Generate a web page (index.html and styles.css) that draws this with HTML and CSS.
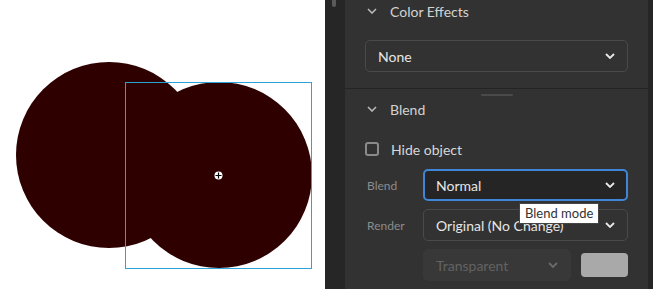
FILE: index.html
```html
<!DOCTYPE html>
<html lang="en">
<head>
    <meta charset="UTF-8">
    <title>Properties - Blend</title>
    <link rel="stylesheet" href="styles.css">
</head>
<body>
    <div class="stage">
        <svg class="canvas" width="325" height="289" viewBox="0 0 325 289">
            <circle cx="109" cy="155" r="93" fill="#2e0000"/>
            <circle cx="219" cy="175" r="93" fill="#2e0000"/>
            <rect x="125.5" y="82.5" width="186" height="186" fill="none" stroke="#2ba3d8" stroke-width="1"/>
            <circle cx="218.5" cy="175.5" r="4" fill="#ffffff"/>
            <path d="M218.5 172.5v6M215.5 175.5h6" stroke="#000" stroke-width="1.2"/>
        </svg>
    </div>
    <div class="gutter"><div class="thumb"></div></div>
    <div class="panel">
        <section class="group first">
            <div class="group-head">
                <svg class="caret" width="10" height="6" viewBox="0 0 10 6"><path d="M1 1l4 4 4-4" fill="none" stroke="#b8b8b8" stroke-width="1.6"/></svg>
                <span>Color Effects</span>
            </div>
            <div class="select">
                <span>None</span>
                <svg class="chev" width="10" height="6" viewBox="0 0 10 6"><path d="M1 1l4 4 4-4" fill="none" stroke="#e8e8e8" stroke-width="1.8"/></svg>
            </div>
        </section>
        <section class="group">
            <div class="handle"></div>
            <div class="group-head">
                <svg class="caret" width="10" height="6" viewBox="0 0 10 6"><path d="M1 1l4 4 4-4" fill="none" stroke="#b8b8b8" stroke-width="1.6"/></svg>
                <span>Blend</span>
            </div>
            <label class="check">
                <span class="box"></span>
                <span>Hide object</span>
            </label>
            <div class="row">
                <span class="label">Blend</span>
                <div class="select focused">
                    <span>Normal</span>
                    <svg class="chev" width="10" height="6" viewBox="0 0 10 6"><path d="M1 1l4 4 4-4" fill="none" stroke="#e8e8e8" stroke-width="1.8"/></svg>
                    <div class="tooltip">Blend mode</div>
                </div>
            </div>
            <div class="row">
                <span class="label">Render</span>
                <div class="select">
                    <span>Original (No Change)</span>
                    <svg class="chev" width="10" height="6" viewBox="0 0 10 6"><path d="M1 1l4 4 4-4" fill="none" stroke="#e8e8e8" stroke-width="1.8"/></svg>
                </div>
            </div>
            <div class="row">
                <span class="label"></span>
                <div class="select disabled">
                    <span>Transparent</span>
                    <svg class="chev" width="10" height="6" viewBox="0 0 10 6"><path d="M1 1l4 4 4-4" fill="none" stroke="#6a6a6a" stroke-width="1.8"/></svg>
                </div>
                <div class="swatch"></div>
            </div>
        </section>
    </div>
    <div class="edge"></div>
</body>
</html>
```

FILE: styles.css
```css
body {
    margin: 0;
    width: 653px;
    height: 289px;
    overflow: hidden;
    display: flex;
    font-family: Lato, "Noto Sans", sans-serif;
    background-color: #282828;
}
.stage {
    width: 325px;
    height: 289px;
    background-color: #ffffff;
    flex-shrink: 0;
}
.canvas {
    display: block;
}
.gutter {
    width: 20px;
    flex-shrink: 0;
    background-color: #262626;
}
.thumb {
    width: 4px;
    height: 7px;
    margin-left: 7px;
    background-color: #5a5a5a;
    border-radius: 0 0 2px 2px;
}
.panel {
    width: 303px;
    flex-shrink: 0;
    background-color: #323232;
    display: flex;
    flex-direction: column;
}
.edge {
    flex: 1;
    background-color: #262626;
}
.group {
    padding: 0 20px 0 20px;
}
.group.first {
    padding-bottom: 16px;
    border-bottom: 1px solid #242424;
}
.group-head {
    height: 24px;
    display: flex;
    align-items: center;
    color: #d2d2d2;
    font-size: 14px;
}
.first .group-head {
    margin-top: -1px;
}
.caret {
    margin: 0 13px 0 2px;
}
.first .select {
    margin-top: 17px;
}
.handle {
    width: 32px;
    height: 2px;
    margin: 5px auto 0;
    background-color: #4a4a4a;
    border-radius: 1px;
}
.group .handle + .group-head {
    margin-top: 1px;
}
.select {
    position: relative;
    flex: 1;
    height: 32px;
    box-sizing: border-box;
    border: 1px solid #4a4a4a;
    border-radius: 5px;
    display: flex;
    align-items: center;
    justify-content: space-between;
    padding: 0 12px 0 12px;
    color: #e6e6e6;
    font-size: 14px;
}
.select.focused {
    border: 2px solid #3f86d8;
    padding-left: 11px;
    padding-right: 11px;
    background-color: #252525;
}
.select.disabled {
    flex: 0 0 148px;
    border-color: #383838;
    background-color: #383838;
    color: #636363;
}
.check {
    display: flex;
    align-items: center;
    margin: 20px 0 0 0;
    height: 16px;
    color: #d8d8d8;
    font-size: 14px;
}
.box {
    width: 10px;
    height: 10px;
    border: 2px solid #8a8a8a;
    border-radius: 3px;
    margin-right: 12px;
}
.row {
    display: flex;
    align-items: center;
    margin-top: 8px;
}
.check + .row {
    margin-top: 12px;
}
.label {
    width: 58px;
    flex-shrink: 0;
    color: #8c8c8c;
    font-size: 12px;
    padding-left: 2px;
    box-sizing: border-box;
}
.swatch {
    width: 48px;
    height: 24px;
    margin-left: 10px;
    background-color: #a9a9a9;
    border-radius: 4px;
}
.tooltip {
    position: absolute;
    left: 94px;
    top: 32px;
    padding: 1px 5px 2px 5px;
    background-color: #ffffff;
    border: 1px solid #444;
    color: #333333;
    font-size: 13px;
    white-space: nowrap;
    z-index: 2;
}
```
